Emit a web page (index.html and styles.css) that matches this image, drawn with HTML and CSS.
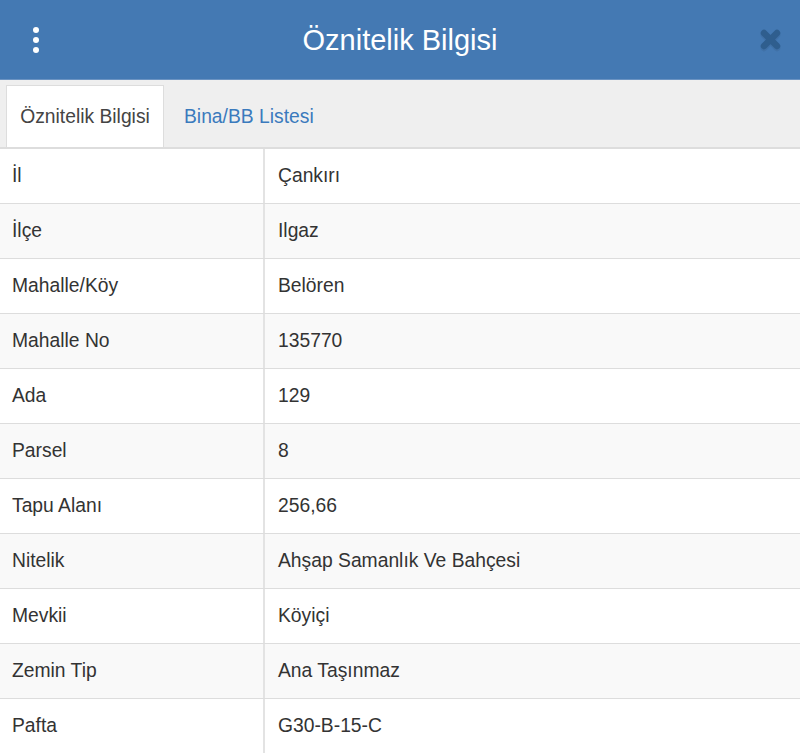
FILE: index.html
```html
<!DOCTYPE html>
<html lang="tr">
<head>
<meta charset="utf-8">
<title>Öznitelik Bilgisi</title>
<link rel="stylesheet" href="styles.css">
</head>
<body>
<div class="panel">
  <header class="topbar">
    <div class="menu-btn" aria-label="Menü">
      <span class="dot"></span><span class="dot"></span><span class="dot"></span>
    </div>
    <h1 class="title">Öznitelik Bilgisi</h1>
    <div class="close-btn" aria-label="Kapat">
      <svg width="24" height="24" viewBox="0 0 24 24">
        <path d="M5 6 L18 19 M18 6 L5 19" stroke="#386593" stroke-width="6.5" stroke-linecap="round" fill="none" transform="translate(0 1)" opacity="0.35"/>
        <path d="M5 5 L18 18 M18 5 L5 18" stroke="#2f5e8e" stroke-width="6.5" stroke-linecap="round" fill="none"/>
      </svg>
    </div>
  </header>
  <nav class="tabs">
    <div class="tab active">Öznitelik Bilgisi</div>
    <div class="tab">Bina/BB Listesi</div>
  </nav>
  <div class="table">
    <div class="row"><div class="cell key">İl</div><div class="cell val">Çankırı</div></div>
    <div class="row"><div class="cell key">İlçe</div><div class="cell val">Ilgaz</div></div>
    <div class="row"><div class="cell key">Mahalle/Köy</div><div class="cell val">Belören</div></div>
    <div class="row"><div class="cell key">Mahalle No</div><div class="cell val">135770</div></div>
    <div class="row"><div class="cell key">Ada</div><div class="cell val">129</div></div>
    <div class="row"><div class="cell key">Parsel</div><div class="cell val">8</div></div>
    <div class="row"><div class="cell key">Tapu Alanı</div><div class="cell val">256,66</div></div>
    <div class="row"><div class="cell key">Nitelik</div><div class="cell val">Ahşap Samanlık Ve Bahçesi</div></div>
    <div class="row"><div class="cell key">Mevkii</div><div class="cell val">Köyiçi</div></div>
    <div class="row"><div class="cell key">Zemin Tip</div><div class="cell val">Ana Taşınmaz</div></div>
    <div class="row"><div class="cell key">Pafta</div><div class="cell val">G30-B-15-C</div></div>
  </div>
</div>
</body>
</html>
```
FILE: styles.css
```css
* { box-sizing: border-box; }
html, body {
  margin: 0;
  padding: 0;
  background: #ffffff;
  font-family: "Liberation Sans", Arial, Helvetica, sans-serif;
  color: #333333;
  overflow: hidden;
}
.panel {
  width: 800px;
  height: 753px;
  overflow: hidden;
}
.topbar {
  height: 80px;
  background: #4479b3;
  border-bottom: 1px solid #6b93c2;
  display: grid;
  grid-template-columns: 72px 1fr 72px;
  align-items: center;
}
.menu-btn {
  display: flex;
  flex-direction: column;
  align-items: center;
  gap: 4px;
}
.dot {
  width: 6px;
  height: 6px;
  border-radius: 50%;
  background: #ffffff;
}
.title {
  margin: 0;
  text-align: center;
  color: #ffffff;
  font-weight: normal;
  font-size: 29px;
  line-height: 34px;
}
.close-btn {
  display: flex;
  justify-content: flex-end;
  padding-right: 17px;
  padding-top: 1px;
}
.close-btn svg { display: block; }
.tabs {
  height: 69px;
  background: #efefef;
  border-bottom: 2px solid #dddddd;
  display: flex;
  align-items: flex-end;
  gap: 5px;
  padding-left: 6px;
}
.tab {
  height: 62px;
  display: flex;
  align-items: center;
  justify-content: center;
  padding: 0 14px;
  white-space: nowrap;
  font-size: 19.3px;
  color: #3a7abd;
  border: 1px solid transparent;
  border-bottom: none;
}
.tab.active {
  background: #ffffff;
  color: #444444;
  border-color: #dddddd;
  width: 158px;
  padding: 0;
}
.table {
  display: flex;
  flex-direction: column;
}
.row {
  display: grid;
  grid-template-columns: 265px 1fr;
  height: 55px;
  border-bottom: 1px solid #dddddd;
}
.row:nth-child(even) { background: #f9f9f9; }
.cell {
  display: flex;
  align-items: center;
  font-size: 19.3px;
  padding: 0 12px;
}
.cell.key {
  border-right: 2px solid #e3e3e3;
}
.cell.val {
  padding-left: 13px;
}
```
